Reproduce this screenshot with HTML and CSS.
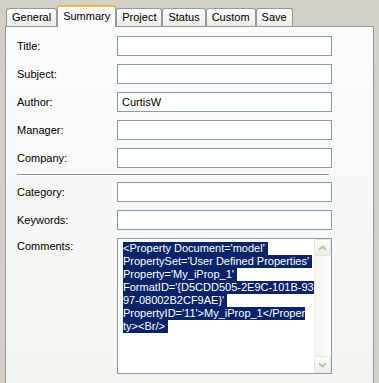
FILE: index.html
```html
<!DOCTYPE html>
<html>
<head>
    <title>Document Properties</title>
    <link rel="stylesheet" href="styles.css">
</head>
<body>
    <div class="tabs">
        <div class="tab">General</div>
        <div class="tab active">Summary</div>
        <div class="tab">Project</div>
        <div class="tab">Status</div>
        <div class="tab">Custom</div>
        <div class="tab">Save</div>
    </div>

    <div class="pane">
        <div class="row"><label>Title:</label><input class="field" type="text"></div>
        <div class="row"><label>Subject:</label><input class="field" type="text"></div>
        <div class="row"><label>Author:</label><input class="field" type="text" value="CurtisW"></div>
        <div class="row"><label>Manager:</label><input class="field" type="text"></div>
        <div class="row"><label>Company:</label><input class="field" type="text"></div>

        <div class="sep"></div>

        <div class="row"><label>Category:</label><input class="field" type="text"></div>
        <div class="row"><label>Keywords:</label><input class="field" type="text"></div>
        <div class="row row-top">
            <label>Comments:</label>
            <div class="memo">
                <div class="memo-text">
                    <div><span class="sel">&lt;Property Document='model' </span></div>
                    <div><span class="sel">PropertySet='User Defined Properties' </span></div>
                    <div><span class="sel">Property='My_iProp_1' </span></div>
                    <div><span class="sel">FormatID='{D5CDD505-2E9C-101B-93</span></div>
                    <div><span class="sel">97-08002B2CF9AE}' </span></div>
                    <div><span class="sel">PropertyID='11'&gt;My_iProp_1&lt;/Proper</span></div>
                    <div><span class="sel">ty&gt;&lt;Br/&gt; </span></div>
                </div>
                <div class="scroll">
                    <div class="sb-btn">
                        <svg width="9" height="6" viewBox="0 0 9 6"><path d="M1 5 L4.5 1.5 L8 5" fill="none" stroke="#c4c2b4" stroke-width="2"/></svg>
                    </div>
                    <div class="sb-track"></div>
                    <div class="sb-btn">
                        <svg width="9" height="6" viewBox="0 0 9 6"><path d="M1 1 L4.5 4.5 L8 1" fill="none" stroke="#c4c2b4" stroke-width="2"/></svg>
                    </div>
                </div>
            </div>
        </div>
    </div>
</body>
</html>
```

FILE: styles.css
```css
body { margin: 0; background: #d4d0c8; font: 11px "Liberation Sans", Arial, sans-serif; color: #000; overflow: hidden; }

.tabs { display: flex; align-items: flex-end; height: 26px; padding-left: 6px; }
.tab { height: 17px; line-height: 17px; padding: 0 5px; border: 1px solid #919b9c; border-bottom: none; border-radius: 3px 3px 0 0; background: linear-gradient(#fffffe, #ecebe5); }
.tab.active { position: relative; z-index: 1; height: 20px; line-height: 19px; margin-bottom: -1px; padding: 0 5px; border-top: 2px solid #f7b33c; background: #fcfcfe; }

.pane { box-sizing: border-box; width: 369px; height: 357px; margin-left: 5px; padding: 9px 0 0 11px; border: 1px solid #919b9c; border-bottom: none; background: linear-gradient(#fcfcfe, #f4f3ee); }

.row { display: flex; align-items: center; margin-bottom: 8px; }
.row label { width: 100px; }
.row-top { align-items: flex-start; margin-bottom: 0; }
.row-top label { padding-top: 2px; }

.field { box-sizing: border-box; width: 215px; height: 20px; margin: 0; padding: 0 4px; border: 1px solid #7f9db9; background: #fff; font: inherit; color: #000; outline: none; }

.sep { width: 312px; margin: -2px 0 6px; border-top: 1px solid #8d8d8d; border-bottom: 1px solid #fff; }

.memo { box-sizing: border-box; display: flex; width: 215px; height: 136px; border: 1px solid #7f9db9; background: #fff; }
.memo-text { flex: 1; padding: 3px 0 0 5px; overflow: hidden; }
.sel { display: inline-block; height: 13px; line-height: 13px; white-space: pre; background: #0a246a; color: #fff; }

.scroll { display: flex; flex-direction: column; width: 17px; background: linear-gradient(to right, #f3f1ec, #fefefb); }
.sb-btn { box-sizing: border-box; display: flex; align-items: center; justify-content: center; height: 17px; border: 1px solid #e8e6dd; border-radius: 2px; background: linear-gradient(#fdfdfb, #eeede6); }
.sb-track { flex: 1; }
```
